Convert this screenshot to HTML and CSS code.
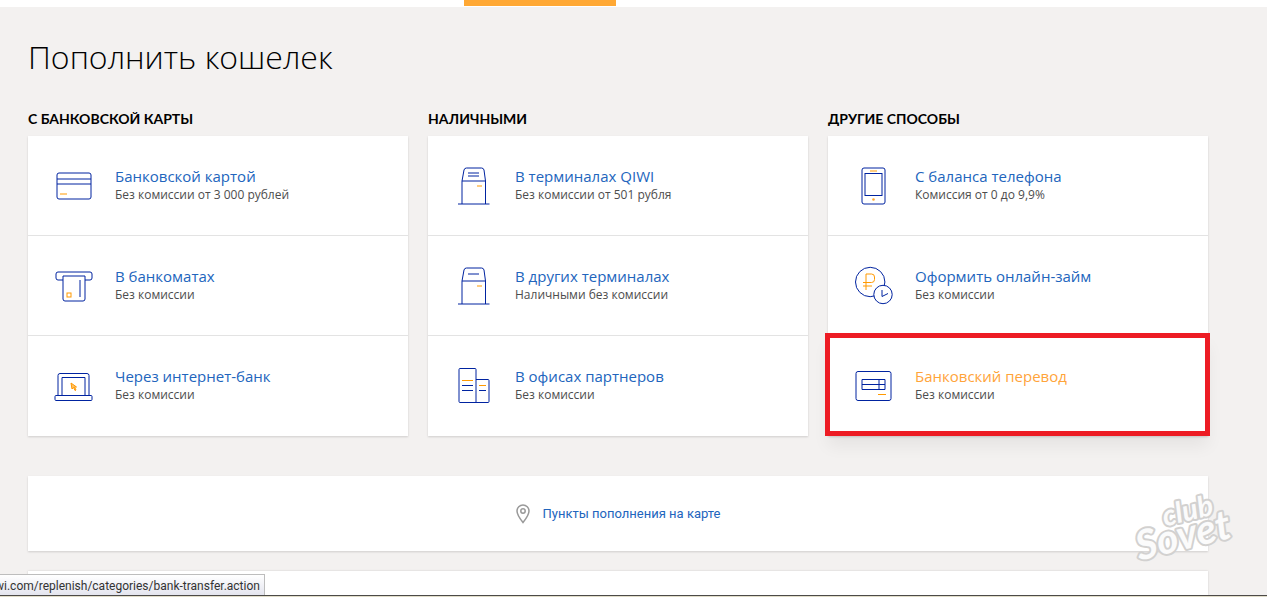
FILE: index.html
```html
<!DOCTYPE html>
<html lang="ru">
<head>
<meta charset="utf-8">
<meta name="viewport" content="width=device-width, initial-scale=1">
<title>Пополнить кошелек</title>
<link rel="stylesheet" href="styles.css">
</head>
<body>
<header class="topbar"><div class="topbar-active"></div></header>
<main class="page">
  <h1 class="page-title">Пополнить кошелек</h1>
  <div class="columns">
    <section class="column">
      <h2 class="column-title">С банковской карты</h2>
      <ul class="methods">
        <li class="method">
          <svg class="icon" viewBox="0 0 40 40" aria-hidden="true"><rect x="3" y="7" width="34" height="26" rx="2"/><path d="M3 13h34M3 18h34"/><path class="accent" d="M6 28h7"/></svg>
          <div class="method-text"><a class="method-link" href="#">Банковской картой</a><p class="method-note">Без комиссии от 3 000 рублей</p></div>
        </li>
        <li class="method">
          <svg class="icon" viewBox="0 0 40 40" aria-hidden="true"><path d="M9 14H4a2 2 0 0 1-2-2V8a2 2 0 0 1 2-2h32a2 2 0 0 1 2 2v4a2 2 0 0 1-2 2h-5M9 10h22v23a2 2 0 0 1-2 2H11a2 2 0 0 1-2-2zM26 14v17"/><rect class="accent" x="13" y="27" width="4" height="4"/></svg>
          <div class="method-text"><a class="method-link" href="#">В банкоматах</a><p class="method-note">Без комиссии</p></div>
        </li>
        <li class="method">
          <svg class="icon" viewBox="0 0 40 40" aria-hidden="true"><path d="M4 29V9.500a2 2 0 0 1 2-2h27a2 2 0 0 1 2 2V29M8 29V11.500h23V29"/><rect x="1" y="29.500" width="37" height="5" rx="1"/><path class="accent accent-fill" d="M17 17l1 6 1.500-1.500 1.500 3 1-.5-1.500-3h2z"/></svg>
          <div class="method-text"><a class="method-link" href="#">Через интернет-банк</a><p class="method-note">Без комиссии</p></div>
        </li>
      </ul>
    </section>
    <section class="column">
      <h2 class="column-title">Наличными</h2>
      <ul class="methods">
        <li class="method">
          <svg class="icon" viewBox="0 0 40 40" aria-hidden="true"><path d="M8 15L10 4q.5-2 2.500-2h15q2 0 2.500 2l1.500 11M8 38V15h23.500v23M4 38h31.500M14 7h11M14 10h11"/><path class="accent" d="M23 20h5"/></svg>
          <div class="method-text"><a class="method-link" href="#">В терминалах QIWI</a><p class="method-note">Без комиссии от 501 рубля</p></div>
        </li>
        <li class="method">
          <svg class="icon" viewBox="0 0 40 40" aria-hidden="true"><path d="M8 15L10 4q.5-2 2.500-2h15q2 0 2.500 2l1.500 11M8 38V15h23.500v23M4 38h31.500M14 8h11"/><path class="accent" d="M23 20h5"/></svg>
          <div class="method-text"><a class="method-link" href="#">В других терминалах</a><p class="method-note">Наличными без комиссии</p></div>
        </li>
        <li class="method">
          <svg class="icon" viewBox="0 0 40 40" aria-hidden="true"><path d="M22 36.500V3.500q0-1-1-1H6q-1 0-1 1v32q0 1 1 1h28q1 0 1-1v-21q0-1-1-1H22M8 19.500h11M8 24.500h11M25 24.500h7"/><path class="accent" d="M8 14.500h11M25 19.500h7"/></svg>
          <div class="method-text"><a class="method-link" href="#">В офисах партнеров</a><p class="method-note">Без комиссии</p></div>
        </li>
      </ul>
    </section>
    <section class="column">
      <h2 class="column-title">Другие способы</h2>
      <ul class="methods">
        <li class="method">
          <svg class="icon" viewBox="0 0 40 40" aria-hidden="true"><rect x="8" y="2" width="23" height="36" rx="2"/><rect x="11" y="7.500" width="17" height="22"/><path class="accent" d="M16 5h7"/><circle class="accent-dot" cx="19.500" cy="33.500" r="1.300"/></svg>
          <div class="method-text"><a class="method-link" href="#">С баланса телефона</a><p class="method-note">Комиссия от 0 до 9,9%</p></div>
        </li>
        <li class="method">
          <svg class="icon" viewBox="0 0 40 40" aria-hidden="true"><circle cx="16.200" cy="16" r="14.700"/><path class="accent" d="M12 24V8h5.500q3 0 3 3v2.500q0 3-3 3H9M9 20h9"/><circle class="clock" cx="29" cy="28.500" r="9.200"/><path d="M28 24v6.500l6-3"/></svg>
          <div class="method-text"><a class="method-link" href="#">Оформить онлайн-займ</a><p class="method-note">Без комиссии</p></div>
        </li>
        <li class="method method-selected">
          <svg class="icon" viewBox="0 0 40 40" aria-hidden="true"><rect x="2" y="5.500" width="35" height="29" rx="2"/><path d="M8 13.500h23v10H8zM8 18.500h23M25 13.500v10"/><path class="accent" d="M24 28.500h8"/></svg>
          <div class="method-text"><a class="method-link" href="#">Банковский перевод</a><p class="method-note">Без комиссии</p></div>
        </li>
      </ul>
    </section>
  </div>
  <div class="map-card">
    <svg class="pin" viewBox="0 0 14 20" aria-hidden="true"><path d="M7 18.500Q1 11 1 7a6 6 0 0 1 12 0q0 4-6 11.500z"/><circle cx="7" cy="7" r="2.200"/></svg>
    <a class="map-link" href="#">Пункты пополнения на карте</a>
  </div>
  <div class="next-card"></div>
</main>
<footer class="taskbar"></footer>
<div class="status">wi.com/replenish/categories/bank-transfer.action</div>
<svg class="watermark" viewBox="0 0 100 72" role="img" aria-label="club Sovet">
  <g transform="rotate(-14 50 36)">
    <text class="mark mark-small" x="32" y="30">club</text>
    <text class="mark mark-large" x="-1" y="57">Sovet</text>
  </g>
</svg>
</body>
</html>
```
FILE: styles.css
```css
* { box-sizing: border-box; }
body {
  margin: 0;
  min-height: 100vh;
  display: flex;
  flex-direction: column;
  position: relative;
  background: #f3f1f0;
  color: #000;
  font-family: "Open Sans", sans-serif;
}
a { text-decoration: none; }
.topbar {
  height: 7px;
  background: #fff;
  padding-left: 464px;
}
.topbar-active {
  width: 152px;
  height: 7px;
  background: #ffa834;
  border-bottom: 1px solid #fff;
}
.page {
  flex: 1;
  display: flex;
  flex-direction: column;
  padding: 26px 59px 0 28px;
}
.page-title {
  margin: 0;
  font-size: 32px;
  line-height: 48px;
  font-weight: 300;
}
.columns {
  display: grid;
  grid-template-columns: repeat(3, 1fr);
  gap: 20px;
  margin-top: 28px;
}
.column-title {
  margin: 0;
  font-family: "Lato", sans-serif;
  font-size: 14px;
  line-height: 20px;
  font-weight: 700;
  text-transform: uppercase;
}
.methods {
  list-style: none;
  margin: 7px 0 0;
  padding: 0;
  background: #fff;
  box-shadow: 0 1px 2px rgba(0, 0, 0, 0.15);
}
.method {
  position: relative;
  display: flex;
  align-items: center;
  gap: 21px;
  min-height: 100px;
  padding: 1px 26px 0;
  border-bottom: 1px solid #e3e3e3;
}
.method:last-child { border-bottom-color: transparent; }
.icon {
  width: 40px;
  height: 40px;
  flex: none;
  fill: none;
  stroke: #0023a0;
  stroke-width: 1;
}
.icon .accent { stroke: #ff9900; }
.icon .accent-fill { fill: #ffc26a; }
.icon .accent-dot { fill: #ffa834; stroke: none; }
.icon .clock { fill: #fff; }
.method-text { padding-bottom: 2px; }
.method-link {
  display: block;
  font-size: 15px;
  line-height: 20px;
  font-weight: 500;
  color: #2265bd;
}
.method-note {
  margin: 0;
  font-size: 12px;
  line-height: 18px;
  color: #4d4d4d;
}
.method-selected { box-shadow: 0 10px 16px rgba(0, 0, 0, 0.06); }
.method-selected::after {
  content: "";
  position: absolute;
  inset: -3px -2px -1px -3px;
  border: 5px solid #ed1c24;
}
.method-selected .method-link { color: #ffa43a; }
.map-card {
  display: flex;
  align-items: center;
  justify-content: center;
  gap: 13px;
  min-height: 75px;
  margin-top: 40px;
  background: #fff;
  box-shadow: 0 1px 2px rgba(0, 0, 0, 0.15);
}
.pin {
  width: 14px;
  height: 20px;
  fill: none;
  stroke: #999;
  stroke-width: 1.5;
}
.map-link {
  font-family: "Roboto", sans-serif;
  font-size: 13px;
  line-height: 20px;
  color: #2265bd;
}
.next-card {
  flex: 1;
  min-height: 24px;
  margin-top: 20px;
  background: #fff;
  box-shadow: 0 0 2px rgba(0, 0, 0, 0.15);
}
.taskbar {
  height: 2px;
  background: #e0dcc8;
  border-top: 1px solid #4c4a48;
}
.status {
  position: absolute;
  left: 0;
  bottom: 2px;
  padding: 2px 4px 0 0;
  text-indent: -5px;
  border: 1px solid #bdbdbd;
  border-width: 1px 1px 0 0;
  background: linear-gradient(#fff, #e4e5ef);
  font-family: "Roboto", sans-serif;
  font-size: 12px;
  line-height: 18px;
  color: #333;
  white-space: nowrap;
}
.watermark {
  position: absolute;
  right: 33px;
  bottom: 33px;
  width: 100px;
  height: 72px;
  overflow: visible;
}
.mark {
  font-family: "Lato", sans-serif;
  font-style: italic;
  font-weight: 700;
  fill: #fbfbfb;
  stroke: #d2d1d0;
  stroke-width: 4;
  stroke-linejoin: round;
  paint-order: stroke;
}
.mark-small { font-size: 29px; }
.mark-large { font-size: 41px; }
```
